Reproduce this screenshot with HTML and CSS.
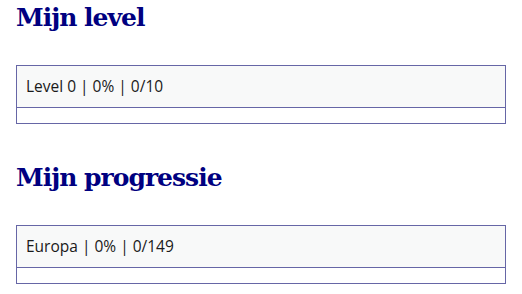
FILE: index.html
```html
<!DOCTYPE html>
<html>
<head>
<meta charset="utf-8">
<link rel="stylesheet" href="styles.css">
</head>
<body>
<div class="page">
  <section class="section">
    <h2 class="title">Mijn level</h2>
    <div class="card">
      <div class="card-header">Level 0 | 0% | 0/10</div>
      <div class="card-body"></div>
    </div>
  </section>
  <section class="section">
    <h2 class="title">Mijn progressie</h2>
    <div class="card">
      <div class="card-header">Europa | 0% | 0/149</div>
      <div class="card-body"></div>
    </div>
  </section>
</div>
</body>
</html>
```

FILE: styles.css
```css
html, body {
  margin: 0;
  padding: 0;
  background: #ffffff;
}
.page {
  padding: 3px 16px 0 16px;
  display: flex;
  flex-direction: column;
  gap: 39px;
}
.title {
  margin: 0 0 32px 0;
  font-family: "DejaVu Serif", "Liberation Serif", serif;
  font-weight: bold;
  font-size: 25px;
  line-height: 30px;
  color: #000080;
  letter-spacing: -1px;
}
.card {
  border: 1px solid #6666a6;
  background: #ffffff;
}
.card-header {
  background: #f8f9f9;
  border-bottom: 1px solid #6666a6;
  padding: 10px 9px;
  font-family: "Open Sans", "Noto Sans", sans-serif;
  font-size: 15.5px;
  line-height: 21px;
  color: #1a1a1a;
}
.card-body {
  height: 15px;
}
```
